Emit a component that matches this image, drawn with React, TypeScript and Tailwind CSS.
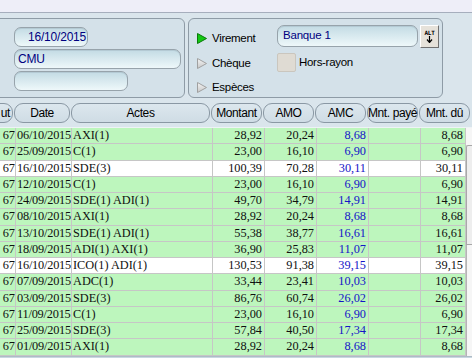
import React from 'react';

type Row = {
  date: string;
  actes: string;
  montant: string;
  amo: string;
  amc: string;
  du: string;
  white?: boolean;
};

const ROWS: Row[] = [
  { date: '06/10/2015', actes: 'AXI(1)', montant: '28,92', amo: '20,24', amc: '8,68', du: '8,68' },
  { date: '25/09/2015', actes: 'C(1)', montant: '23,00', amo: '16,10', amc: '6,90', du: '6,90' },
  { date: '16/10/2015', actes: 'SDE(3)', montant: '100,39', amo: '70,28', amc: '30,11', du: '30,11', white: true },
  { date: '12/10/2015', actes: 'C(1)', montant: '23,00', amo: '16,10', amc: '6,90', du: '6,90' },
  { date: '24/09/2015', actes: 'SDE(1) ADI(1)', montant: '49,70', amo: '34,79', amc: '14,91', du: '14,91' },
  { date: '08/10/2015', actes: 'AXI(1)', montant: '28,92', amo: '20,24', amc: '8,68', du: '8,68' },
  { date: '13/10/2015', actes: 'SDE(1) ADI(1)', montant: '55,38', amo: '38,77', amc: '16,61', du: '16,61' },
  { date: '18/09/2015', actes: 'ADI(1) AXI(1)', montant: '36,90', amo: '25,83', amc: '11,07', du: '11,07' },
  { date: '16/10/2015', actes: 'ICO(1) ADI(1)', montant: '130,53', amo: '91,38', amc: '39,15', du: '39,15', white: true },
  { date: '07/09/2015', actes: 'ADC(1)', montant: '33,44', amo: '23,41', amc: '10,03', du: '10,03' },
  { date: '03/09/2015', actes: 'SDE(3)', montant: '86,76', amo: '60,74', amc: '26,02', du: '26,02' },
  { date: '11/09/2015', actes: 'C(1)', montant: '23,00', amo: '16,10', amc: '6,90', du: '6,90' },
  { date: '25/09/2015', actes: 'SDE(3)', montant: '57,84', amo: '40,50', amc: '17,34', du: '17,34' },
  { date: '01/09/2015', actes: 'AXI(1)', montant: '28,92', amo: '20,24', amc: '8,68', du: '8,68' },
];

const HEADERS = [
  { label: 'ut', w: 'w-[33px] -ml-[20px] justify-end pr-[2px]' },
  { label: 'Date', w: 'w-[56px]' },
  { label: 'Actes', w: 'w-[139px]' },
  { label: 'Montant', w: 'w-[51px]' },
  { label: 'AMO', w: 'w-[51px]' },
  { label: 'AMC', w: 'w-[51px]' },
  { label: 'Mnt. payé', w: 'w-[51px]' },
  { label: 'Mnt. dû', w: 'w-[51px]' },
];

const field =
  'rounded-[7px] border border-[#97a3ab] bg-gradient-to-b from-[#c3dbe4] to-[#eef8fa] shadow-[inset_0_1px_0_#b4cad4] text-[#000080]';

// radio-like arrow in front of each payment mode
const Triangle = ({ active }: { active?: boolean }) => (
  <svg width="10" height="11" viewBox="0 0 10 11" className="shrink-0">
    <defs>
      <linearGradient id="tg" x1="0" y1="0" x2="0" y2="1">
        <stop offset="0" stopColor="#f4f4f4" />
        <stop offset="1" stopColor="#c8c8c8" />
      </linearGradient>
    </defs>
    <polygon
      points="0.5,0.5 9.5,5.5 0.5,10.5"
      fill={active ? '#14c814' : 'url(#tg)'}
      stroke={active ? '#0a7a0a' : '#a0a0a0'}
      strokeWidth="1"
    />
  </svg>
);

export default function App() {
  return (
    <div className="w-[472px] h-[358px] overflow-hidden bg-[#dae5ec] font-['Liberation_Sans',Arial,sans-serif] text-[12px] text-black flex flex-col">
      {/* top band */}
      <div className="h-[13px] shrink-0 bg-[#eeeef8] border-b border-[#a6aebd]" />

      {/* panels */}
      <div className="flex mt-[5px] h-[80px] shrink-0">
        <div className="-ml-[6px] w-[191px] rounded-[6px] border border-[#8e9ba6] bg-[#d4e1e9] pl-[19px] pt-[8px] flex flex-col gap-[2px]">
          <div className={`${field} w-[74px] h-[20px] flex items-center pl-[13px] text-[12px] tracking-[-0.2px]`}>16/10/2015</div>
          <div className={`${field} w-[167px] h-[20px] flex items-center pl-[3px] tracking-[-0.2px]`}>CMU</div>
          <div className={`${field} w-[114px] h-[20px]`} />
        </div>

        <div className="ml-[3px] w-[255px] rounded-[6px] border border-[#8e9ba6] bg-[#d4e1e9] pl-[8px] pt-[6px] flex">
          <div className="flex flex-col w-[80px] pt-[8px] gap-[13px] leading-[11px] tracking-[-0.3px] text-[11.5px]">
            <div className="flex items-center gap-[5px]"><Triangle active />Virement</div>
            <div className="flex items-center gap-[5px] mt-px"><Triangle />Chèque</div>
            <div className="flex items-center gap-[5px]"><Triangle />Espèces</div>
          </div>
          <div className="flex flex-col gap-[5px]">
            <div className="flex items-start gap-[2px]">
              <div className={`${field} w-[141px] h-[22px] flex items-center pl-[5px] text-[11.5px] tracking-[-0.2px]`}>Banque 1</div>
              <div className="w-[19px] h-[23px] bg-[#e6e2da] border border-t-white border-l-white border-b-[#707070] border-r-[#707070] flex flex-col items-center justify-center leading-none">
                <span className="font-['DejaVu_Sans_Mono',monospace] font-bold text-[6px] tracking-[-0.3px]">ALT</span>
                <svg width="7" height="7" viewBox="0 0 7 7">
                  <path d="M3.5 0 V6 M1 3.5 L3.5 6.5 L6 3.5" stroke="#000" strokeWidth="1.2" fill="none" />
                </svg>
              </div>
            </div>
            <div className="flex items-center gap-[3px] text-[11.5px] tracking-[-0.3px]">
              <div className="w-[19px] h-[19px] rounded-[2px] bg-[#dfdbd3] border border-[#cac6be]" />
              Hors-rayon
            </div>
          </div>
        </div>
      </div>

      {/* column headers */}
      <div className="flex gap-px mt-[5px] h-[20px] shrink-0">
        {HEADERS.map((h) => (
          <div
            key={h.label}
            className={`${h.w} shrink-0 h-[20px] rounded-[9px] border border-[#8a98a4] bg-gradient-to-b from-[#dce7ee] to-[#cfdce5] flex items-center justify-center text-[12px] tracking-[-0.4px] whitespace-nowrap`}
          >
            {h.label}
          </div>
        ))}
      </div>

      {/* grid */}
      <div className="flex mt-[4px] border-t border-[#eef3f6]">
        <div className="flex flex-col font-['Liberation_Serif','Times_New_Roman',serif] text-[12.3px] leading-[14px] text-[#101010]">
          {ROWS.map((r, i) => (
            <div
              key={i}
              className={`grid grid-cols-[15px_56px_141px_52px_52px_52px_52px_46px] h-[16.25px] border-b border-[#c6c6c6] ${r.white ? 'bg-white' : 'bg-[#bdf6bd]'}`}
            >
              <div className="text-right overflow-hidden whitespace-nowrap">67</div>
              <div className="border-l border-[#c6c6c6] pl-px whitespace-nowrap tracking-[-0.2px]">{r.date}</div>
              <div className="border-l border-[#c6c6c6] pl-px whitespace-nowrap">{r.actes}</div>
              <div className="border-l border-[#c6c6c6] text-right pr-[2px]">{r.montant}</div>
              <div className="border-l border-[#c6c6c6] text-right pr-[2px]">{r.amo}</div>
              <div className="border-l border-[#c6c6c6] text-right pr-[2px] text-[#1414c8]">{r.amc}</div>
              <div className="border-l border-[#c6c6c6]" />
              <div className="border-l border-r border-[#c6c6c6] text-right pr-[2px]">{r.du}</div>
            </div>
          ))}
        </div>
        {/* scrollbar strip */}
        <div className="w-[6px] bg-[#f6f6f6] flex flex-col">
          <div className="h-[17px]" />
          <div className="h-[100px] border-l border-t border-b border-[#a8a8a8] rounded-tl-[2px] bg-[#eeeeee]" />
          <div className="flex-1 border-l border-[#b4b4b4]" />
        </div>
      </div>

      <div className="flex-1 bg-[#c9d7e1] border-t border-[#aebbc6]" />
    </div>
  );
}
